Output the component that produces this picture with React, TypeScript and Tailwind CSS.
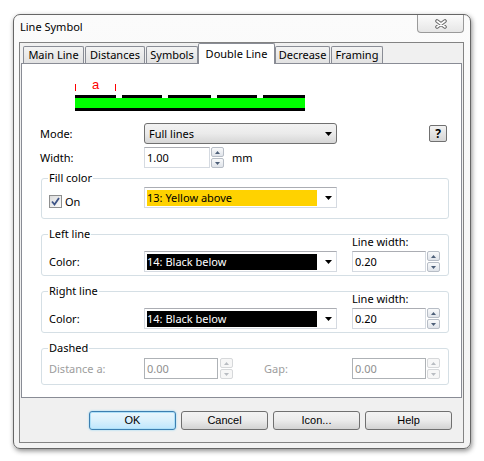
import type { ReactNode } from "react";

const uiFont = "[font-family:'Noto_Sans',sans-serif] text-[11px] leading-[16px] text-black";

const tabs = [
  { label: "Main Line", cls: "ml-[2px] w-[61px]" },
  { label: "Distances", cls: "ml-[1px] w-[60px]" },
  { label: "Symbols", cls: "ml-[1px] w-[52px]" },
  { label: "Double Line", cls: "w-[77px]", active: true },
  { label: "Decrease", cls: "w-[55px]" },
  { label: "Framing", cls: "ml-[1px] w-[52px]" },
];

const Caret = () => (
  <svg width="7" height="4" viewBox="0 0 7 4">
    <path d="M0 0 L7 0 L3.5 4Z" fill="#000" />
  </svg>
);

const Spinner = ({ disabled }: { disabled?: boolean }) => {
  const arrow = disabled ? "#b9bdc2" : "#4d5f78";
  return (
    <div className="flex h-[21px] w-[13px] flex-col gap-[1px]">
      {["up", "down"].map((dir) => (
        <div
          key={dir}
          className={`flex flex-1 items-center justify-center rounded-[2px] border ${
            disabled
              ? "border-[#d6d8da] bg-[#f7f7f7]"
              : "border-[#b7bdc6] bg-gradient-to-b from-[#f9fafb] to-[#e0e4ea]"
          }`}
        >
          <svg width="5" height="3" viewBox="0 0 5 3">
            <path d={dir === "up" ? "M0 3 L2.5 0 L5 3Z" : "M0 0 L2.5 3 L5 0Z"} fill={arrow} />
          </svg>
        </div>
      ))}
    </div>
  );
};

const NumberBox = ({ value, className, disabled }: { value: string; className: string; disabled?: boolean }) => (
  <div
    className={`flex h-[21px] items-center border bg-white pl-[2px] ${className} ${
      disabled ? "border-[#aeb2b6] text-[#8f8f8f]" : "border-[#d5dae1] border-t-[#abadb3]"
    }`}
  >
    {value}
  </div>
);

const ColorCombo = ({ label, swatch }: { label: string; swatch: string }) => (
  <div className="flex h-[21px] w-[193px] items-center border border-[#d5dae1] border-t-[#abadb3] bg-white pl-[2px]">
    <div className={`flex h-[16px] w-[170px] items-center ${swatch}`}>{label}</div>
    <div className="ml-[8px]">
      <Caret />
    </div>
  </div>
);

const GroupBox = ({ title, className, children }: { title: string; className: string; children: ReactNode }) => (
  <fieldset className={`m-0 w-[408px] rounded-[3px] border border-[#d5dfe5] p-0 ${className}`}>
    <legend className="ml-[6px] px-[1px] leading-[16px]">{title}</legend>
    {children}
  </fieldset>
);

const LineGroup = ({ title }: { title: string }) => (
  <GroupBox title={title} className="h-[50px]">
    <div className="-mt-[7px] flex items-end">
      <div className="flex items-center">
        <span className="w-[102px] pl-[7px]">Color:</span>
        <ColorCombo label="14: Black below" swatch="bg-black text-white" />
      </div>
      <div className="ml-[15px] flex flex-col">
        <span className="leading-[14px]">Line width:</span>
        <div className="mt-[2px] flex">
          <NumberBox value="0.20" className="w-[74px]" />
          <div className="ml-[1px]">
            <Spinner />
          </div>
        </div>
      </div>
    </div>
  </GroupBox>
);

const DialogButton = ({ label, primary }: { label: string; primary?: boolean }) => (
  <button
    type="button"
    className={`h-[19px] w-[87px] rounded-[3px] border [font-family:'Liberation_Sans',sans-serif] text-[11px] leading-[15px] text-black ${
      primary
        ? "border-[#3c7fb1] bg-gradient-to-b from-[#eaf6fd] via-[#d9f0fc] to-[#bee6fd] shadow-[inset_0_0_0_1px_#aee0f8,0_0_2px_#7fd0f5]"
        : "border-[#707070] bg-gradient-to-b from-[#f3f3f3] via-[#ebebeb] to-[#d3d3d3]"
    }`}
  >
    {label}
  </button>
);

export default function App() {
  return (
    <div className={`h-[461px] w-[484px] bg-white pl-[13px] pt-[14px] ${uiFont}`}>
      <div className="flex h-[435px] w-[458px] flex-col rounded-[7px] border border-[#666] bg-gradient-to-b from-[#fbfbfb] to-[#f3f3f3] shadow-[1px_2px_5px_rgba(0,0,0,0.45)]">
        {/* title bar */}
        <div className="flex h-[27px] items-start justify-between">
          <span className="pl-[6px] pt-[4px]">Line Symbol</span>
          <div className="mr-[6px] flex h-[18px] w-[47px] items-center justify-center rounded-b-[4px] border border-t-0 border-[#9a9a9a] bg-gradient-to-b from-[#fbfbfb] to-[#e6e6e6]">
            <svg width="12" height="10" viewBox="0 0 12 10">
              <path d="M2 2 L10 8 M10 2 L2 8" stroke="#6a6a6a" strokeWidth="3.6" strokeLinecap="round" />
              <path d="M2 2 L10 8 M10 2 L2 8" stroke="#fff" strokeWidth="1.6" strokeLinecap="round" />
            </svg>
          </div>
        </div>

        {/* client area */}
        <div className="ml-[5px] flex h-[401px] w-[445px] flex-col border border-[#838383] bg-[#f0f0f0]">
          <div className="ml-[1px] w-[441px]">
            <div className="flex h-[20px] items-end">
              {tabs.map((t) =>
                t.active ? (
                  <div
                    key={t.label}
                    className={`relative z-10 -mb-[1px] flex h-[21px] items-center justify-center rounded-t-[2px] border border-b-0 border-[#898c95] bg-white ${t.cls}`}
                  >
                    {t.label}
                  </div>
                ) : (
                  <div
                    key={t.label}
                    className={`flex h-[17px] items-center justify-center rounded-t-[2px] border border-b-0 border-[#898c95] bg-gradient-to-b from-[#f3f3f3] to-[#e2e2e2] ${t.cls}`}
                  >
                    {t.label}
                  </div>
                )
              )}
            </div>

            <div className="flex h-[335px] flex-col border border-[#898c95] bg-white">
              {/* line preview: dashed left edge, green fill, solid right edge */}
              <svg className="ml-[53px] mt-[6px]" width="231" height="42" viewBox="0 0 231 42">
                <path d="M0.5 14 V21 M40.5 14 V21" stroke="#ff0000" strokeWidth="1" />
                <text x="20.5" y="19" textAnchor="middle" fontSize="13" fill="#ff0000" fontFamily="Liberation Sans, sans-serif">
                  a
                </text>
                <rect x="0" y="25" width="41" height="3" fill="#000" />
                <rect x="47" y="25" width="40" height="3" fill="#000" />
                <rect x="93" y="25" width="43" height="3" fill="#000" />
                <rect x="142" y="25" width="40" height="3" fill="#000" />
                <rect x="188" y="25" width="42" height="3" fill="#000" />
                <rect x="0" y="28" width="230" height="10" fill="#00ff00" />
                <rect x="0" y="38" width="230" height="3" fill="#000" />
              </svg>

              <div className="mt-[11px] flex items-center pl-[18px]">
                <span className="w-[104px]">Mode:</span>
                <div className="flex h-[21px] w-[193px] items-center justify-between rounded-[3px] border border-[#707070] bg-gradient-to-b from-[#f2f2f2] via-[#ebebeb] to-[#d6d6d6] pl-[4px] pr-[4px]">
                  <span>Full lines</span>
                  <Caret />
                </div>
                <button
                  type="button"
                  className="ml-[92px] flex h-[17px] w-[18px] items-center justify-center rounded-[2px] border border-[#707070] bg-gradient-to-b from-[#f2f2f2] to-[#d6d6d6] text-[12px] font-bold leading-none"
                >
                  ?
                </button>
              </div>

              <div className="mt-[3px] flex items-center pl-[18px]">
                <span className="w-[104px]">Width:</span>
                <NumberBox value="1.00" className="w-[66px]" />
                <div className="ml-[1px]">
                  <Spinner />
                </div>
                <span className="ml-[8px]">mm</span>
              </div>

              <div className="ml-[19px] mt-[2px] flex flex-col gap-[7px]">
                <GroupBox title="Fill color" className="h-[49px]">
                  <div className="mt-[1px] flex items-start">
                    <div className="mt-[8px] flex w-[102px] items-center pl-[7px]">
                      <div className="flex h-[13px] w-[13px] items-center justify-center border border-[#8e8f8f] bg-gradient-to-br from-[#dcdcdc] to-[#fbfbfb]">
                        <svg width="9" height="9" viewBox="0 0 9 9">
                          <path d="M1 4.5 L3.5 7.5 L8 1" fill="none" stroke="#3e5487" strokeWidth="1.8" />
                        </svg>
                      </div>
                      <span className="ml-[3px] leading-[13px]">On</span>
                    </div>
                    <ColorCombo label="13: Yellow above" swatch="bg-[#ffd200] text-black" />
                  </div>
                </GroupBox>

                <LineGroup title="Left line" />
                <LineGroup title="Right line" />

                <GroupBox title="Dashed" className="h-[45px]">
                  <div className="mt-[2px] flex items-center text-[#9d9d9d]">
                    <span className="w-[102px] pl-[7px]">Distance a:</span>
                    <NumberBox value="0.00" className="w-[74px]" disabled />
                    <div className="ml-[2px]">
                      <Spinner disabled />
                    </div>
                    <span className="ml-[31px] w-[88px]">Gap:</span>
                    <NumberBox value="0.00" className="w-[74px]" disabled />
                    <div className="ml-[1px]">
                      <Spinner disabled />
                    </div>
                  </div>
                </GroupBox>
              </div>
            </div>
          </div>

          <div className="mt-[13px] flex justify-end gap-[5px] pr-[11px]">
            <DialogButton label="OK" primary />
            <DialogButton label="Cancel" />
            <DialogButton label="Icon..." />
            <DialogButton label="Help" />
          </div>
        </div>
      </div>
    </div>
  );
}
